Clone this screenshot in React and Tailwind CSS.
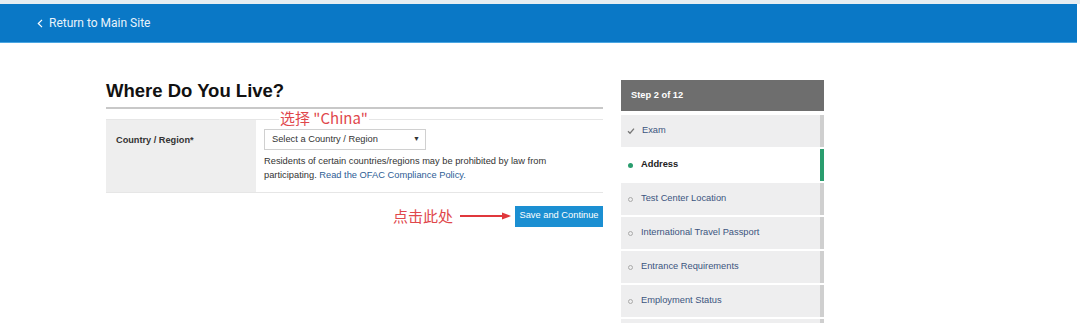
const steps = [
  { label: 'Exam', state: 'done' },
  { label: 'Address', state: 'current' },
  { label: 'Test Center Location', state: 'todo' },
  { label: 'International Travel Passport', state: 'todo' },
  { label: 'Entrance Requirements', state: 'todo' },
  { label: 'Employment Status', state: 'todo' },
  { label: '', state: 'todo' },
]

const StepIcon = ({ state }) => {
  if (state === 'done') {
    return (
      <svg width="8" height="8" viewBox="0 0 8 8" className="shrink-0">
        <path d="M1 4.3 L3 6.2 L7 1.6" fill="none" stroke="#777" strokeWidth="1.3" />
      </svg>
    )
  }
  if (state === 'current') {
    return <span className="w-[5px] h-[5px] rounded-full bg-[#2a9d6e] shrink-0 mx-[1px]"></span>
  }
  return <span className="w-[5px] h-[5px] rounded-full border border-[#aaa] shrink-0 mx-[1px]"></span>
}

const App = () => {
  return (
    <div className="w-[1080px] h-[323px] overflow-hidden bg-white font-['Liberation_Sans',Arial,sans-serif]">
      <div className="h-[4px] bg-[#e6edf2]"></div>
      <div className="h-[39px] w-[1077px] bg-[#0a78c6] border-b border-[#4aa6e2] flex items-center pl-[37px]">
        <span className="text-[#e8f3fb] text-[12px] font-['Roboto',sans-serif] flex items-center gap-[6px]">
          <svg width="6" height="9" viewBox="0 0 6 9">
            <path d="M5 0.8 L1.3 4.5 L5 8.2" fill="none" stroke="#fff" strokeWidth="1.2" />
          </svg>
          Return to Main Site
        </span>
      </div>

      <div className="flex pl-[106px] pt-[37px] gap-[18px]">
        <div className="w-[497px]">
          <h1 className="text-[18.5px] leading-[22px] font-bold text-[#111]">Where Do You Live?</h1>
          <div className="mt-[5px] h-[2px] bg-[#c8c8c8]"></div>

          <div className="relative mt-[10px] flex border-t border-b border-[#e6e6e6]">
            <span className="absolute left-[173px] -top-[11px] text-[15px] leading-[17px] text-[#e0474c] font-['Noto_Sans_CJK_SC',sans-serif] bg-white px-[1px]">
              选择 "China"
            </span>
            <div className="w-[150px] bg-[#eeeeee] pl-[10px] pt-[14px]">
              <span className="block text-[9.2px] leading-[12px] font-bold text-[#333]">Country / Region*</span>
            </div>
            <div className="flex-1 pl-[8px] pt-[9px] pb-[10px]">
              <div className="w-[162px] h-[21px] border border-[#d0d0d0] flex items-center justify-between pl-[7px] pr-[5px] text-[9.3px] text-[#333]">
                <span>Select a Country / Region</span>
                <span className="text-[7px]">▼</span>
              </div>
              <p className="mt-[4px] text-[9.3px] leading-[14px] text-[#333]">
                Residents of certain countries/regions may be prohibited by law from
                <br />
                participating. <span className="text-[#2d5d95]">Read the OFAC Compliance Policy.</span>
              </p>
            </div>
          </div>

          <div className="flex items-center justify-end mt-[12px]">
            <span className="text-[15px] text-[#e0474c] font-['Noto_Sans_CJK_SC',sans-serif]">点击此处</span>
            <svg width="52" height="8" viewBox="0 0 52 8" className="ml-[7px] mr-[3px]">
              <path d="M0 4 L44 4" stroke="#e0383c" strokeWidth="2" />
              <path d="M42 0.5 L51 4 L42 7.5 Z" fill="#e0383c" />
            </svg>
            <button className="h-[21px] w-[88px] bg-[#1b8fd2] text-white text-[9.3px] font-['Liberation_Sans',sans-serif]">
              Save and Continue
            </button>
          </div>
        </div>

        <div className="w-[203px]">
          <div className="h-[31px] bg-[#6e6e6e] flex items-center pl-[10px] text-white text-[9.3px] font-bold">
            Step 2 of 12
          </div>
          <div className="mt-[4px] flex flex-col gap-[2px]">
            {steps.map((s, i) => (
              <div key={i} className="flex h-[32px]">
                <div
                  className={`flex-1 flex items-center gap-[7px] pl-[6px] text-[9.3px] ${
                    s.state === 'current' ? 'bg-white font-bold text-[#222]' : 'bg-[#eeeeef] text-[#3c5580]'
                  }`}
                >
                  {s.label && <StepIcon state={s.state} />}
                  {s.label}
                </div>
                <div className={`w-[4px] ${s.state === 'current' ? 'bg-[#2a9d6e]' : 'bg-[#cfcfcf]'}`}></div>
              </div>
            ))}
          </div>
        </div>
      </div>
    </div>
  )
}

export default App
